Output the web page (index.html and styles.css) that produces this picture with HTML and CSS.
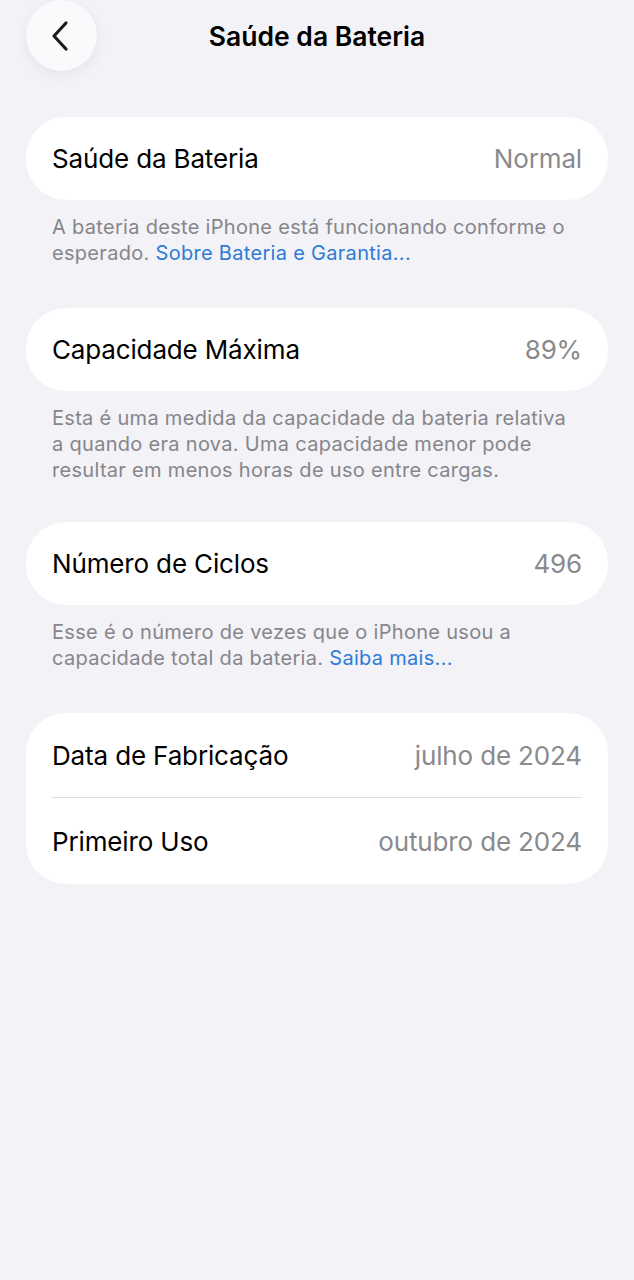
FILE: index.html
```html
<!DOCTYPE html>
<html lang="pt-BR">
<head>
<meta charset="utf-8">
<link rel="stylesheet" href="styles.css">
</head>
<body>
<div class="page">
  <header class="nav">
    <button class="back" aria-label="Voltar">
      <svg width="22" height="32" viewBox="0 0 22 32"><path d="M17 3 L5 16 L17 29" fill="none" stroke="#1c1c1e" stroke-width="3.2" stroke-linecap="round" stroke-linejoin="round"/></svg>
    </button>
    <h1 class="title">Saúde da Bateria</h1>
  </header>

  <section class="group g1">
    <div class="card">
      <div class="row"><span class="label">Saúde da Bateria</span><span class="value">Normal</span></div>
    </div>
    <p class="footer">A bateria deste iPhone está funcionando conforme o esperado. <a class="link">Sobre Bateria e Garantia...</a></p>
  </section>

  <section class="group g2">
    <div class="card">
      <div class="row"><span class="label">Capacidade Máxima</span><span class="value">89%</span></div>
    </div>
    <p class="footer">Esta é uma medida da capacidade da bateria relativa a quando era nova. Uma capacidade menor pode resultar em menos horas de uso entre cargas.</p>
  </section>

  <section class="group g3">
    <div class="card">
      <div class="row"><span class="label">Número de Ciclos</span><span class="value">496</span></div>
    </div>
    <p class="footer">Esse é o número de vezes que o iPhone usou a capacidade total da bateria. <a class="link">Saiba mais...</a></p>
  </section>

  <section class="group g4">
    <div class="card">
      <div class="row r1"><span class="label">Data de Fabricação</span><span class="value">julho de 2024</span></div>
      <div class="divider"></div>
      <div class="row r2"><span class="label">Primeiro Uso</span><span class="value">outubro de 2024</span></div>
    </div>
  </section>
</div>
</body>
</html>
```

FILE: styles.css
```css
* { box-sizing: border-box; }
html, body {
  margin: 0;
  padding: 0;
  background: #f2f2f7;
}
body {
  font-family: Inter, "Noto Sans", Roboto, sans-serif;
  color: #000;
  -webkit-font-smoothing: antialiased;
}
.page {
  width: 634px;
  padding: 0 26px;
}
.nav {
  position: relative;
  height: 72px;
  display: flex;
  align-items: center;
  justify-content: center;
}
.back {
  position: absolute;
  left: 0;
  top: 0;
  width: 71px;
  height: 71px;
  border-radius: 50%;
  border: none;
  background: #fafafc;
  box-shadow: 0 4px 14px rgba(0,0,0,0.06);
  display: flex;
  align-items: center;
  justify-content: center;
  padding: 0 4px 0 0;
}
.title {
  margin: 0;
  font-size: 26.5px;
  font-weight: 600;
  letter-spacing: 0;
  color: #000;
}
.group { margin-top: 40px; }
.group.g1 { margin-top: 45px; }
.group.g2 { margin-top: 42px; }
.group.g3 { margin-top: 39px; }
.group.g4 { margin-top: 42px; }
.card {
  background: #fff;
  border-radius: 40px;
  padding: 0 26px;
}
.row {
  height: 83px;
  display: flex;
  align-items: center;
  justify-content: space-between;
  font-size: 26px;
  letter-spacing: -0.15px;
}
.row.r1 { height: 84px; }
.row.r2 { height: 86px; }
.label { color: #000; }
.value { color: #8a8a8e; }
.divider {
  height: 1px;
  background: #dedee2;
}
.footer {
  margin: 14px 0 0 0;
  padding: 0 26px;
  font-size: 20px;
  line-height: 26px;
  color: #86868b;
  letter-spacing: 0.3px;
}
.link { color: #2f7bd6; text-decoration: none; }
```
